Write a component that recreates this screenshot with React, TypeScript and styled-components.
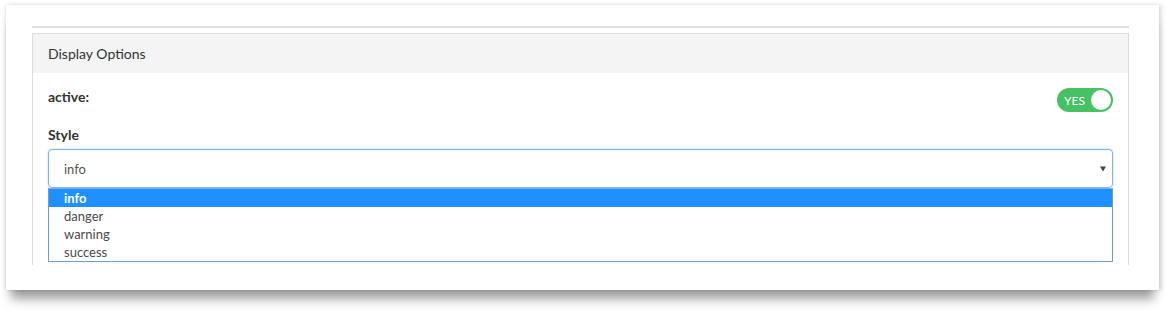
import React from "react";
import styled, { createGlobalStyle } from "styled-components";

const Global = createGlobalStyle`
  html, body { margin: 0; padding: 0; background: #fff; }
  body { font-family: "Lato", "Open Sans", sans-serif; color: #333; }
`;

const Page = styled.div`
  width: 1173px;
  height: 319px;
  padding: 5px 0 0 6px;
  box-sizing: border-box;
`;

const Card = styled.div`
  width: 1153px;
  height: 285px;
  background: #fff;
  box-sizing: border-box;
  padding: 21px 30px 0 26px;
  box-shadow: 0 14px 10px -5px rgba(0, 0, 0, 0.38), 3px 0 4px rgba(0, 0, 0, 0.12), -1px 0 3px rgba(0, 0, 0, 0.1);
  overflow: hidden;
`;

const TopRule = styled.div`
  height: 2px;
  background: #dedede;
  margin-bottom: 5px;
  width: 1097px;
`;

const Panel = styled.div`
  width: 1097px;
  border: 1px solid #dcdcdc;
  border-bottom: none;
  box-sizing: border-box;
`;

const PanelHeader = styled.div`
  height: 39px;
  background: #f4f4f4;
  display: flex;
  align-items: center;
  padding: 0 15px;
  font-size: 14px;
  color: #333;
`;

const PanelBody = styled.div`
  padding: 15px 15px 3px 15px;
  display: flex;
  flex-direction: column;
`;

const Row = styled.div`
  display: flex;
  align-items: flex-start;
  justify-content: space-between;
  height: 24px;
`;

const Label = styled.div`
  font-size: 14px;
  font-weight: 700;
  color: #333;
  line-height: 18px;
`;

const StyleLabel = styled(Label)`
  margin-top: 14px;
  margin-bottom: 5px;
  line-height: 18px;
`;

const Toggle = styled.div`
  width: 56px;
  height: 24px;
  border-radius: 12px;
  background: #46c164;
  display: flex;
  align-items: center;
  justify-content: space-between;
  padding: 0 2px 0 7px;
  box-sizing: border-box;
`;

const ToggleText = styled.span`
  color: #fff;
  font-size: 12px;
  font-weight: 400;
`;

const Knob = styled.span`
  width: 20px;
  height: 20px;
  border-radius: 50%;
  background: #fff;
`;

const Select = styled.div`
  height: 39px;
  border: 1px solid #7eb4ea;
  border-radius: 4px;
  box-shadow: 0 0 2px rgba(102, 175, 233, 0.5);
  display: flex;
  align-items: center;
  justify-content: space-between;
  padding: 0 6px 0 15px;
  box-sizing: border-box;
  font-size: 13px;
  color: #555;
`;

const Arrow = styled.svg`
  width: 6px;
  height: 6px;
`;

const List = styled.div`
  border: 1px solid #6f9bd6;
  border-top-color: #7eb4ea;
  display: flex;
  flex-direction: column;
`;

const Option = styled.div<{ $selected?: boolean }>`
  height: 18px;
  line-height: 18px;
  padding-left: 15px;
  font-size: 13px;
  font-weight: ${(p) => (p.$selected ? 700 : 400)};
  background: ${(p) => (p.$selected ? "#1e90ff" : "#fff")};
  color: ${(p) => (p.$selected ? "#fff" : "#4a4a4a")};
`;

const options = ["info", "danger", "warning", "success"];

export default function App() {
  return (
    <>
      <Global />
      <Page>
        <Card>
          <TopRule />
          <Panel>
            <PanelHeader>Display Options</PanelHeader>
            <PanelBody>
              <Row>
                <Label>active:</Label>
                <Toggle>
                  <ToggleText>YES</ToggleText>
                  <Knob />
                </Toggle>
              </Row>
              <StyleLabel>Style</StyleLabel>
              <Select>
                <span>info</span>
                <Arrow viewBox="0 0 6 6">
                  <path d="M0 0.5 L6 0.5 L3 5.5 Z" fill="#444" />
                </Arrow>
              </Select>
              <List>
                {options.map((o) => (
                  <Option key={o} $selected={o === "info"}>
                    {o}
                  </Option>
                ))}
              </List>
            </PanelBody>
          </Panel>
        </Card>
      </Page>
    </>
  );
}
